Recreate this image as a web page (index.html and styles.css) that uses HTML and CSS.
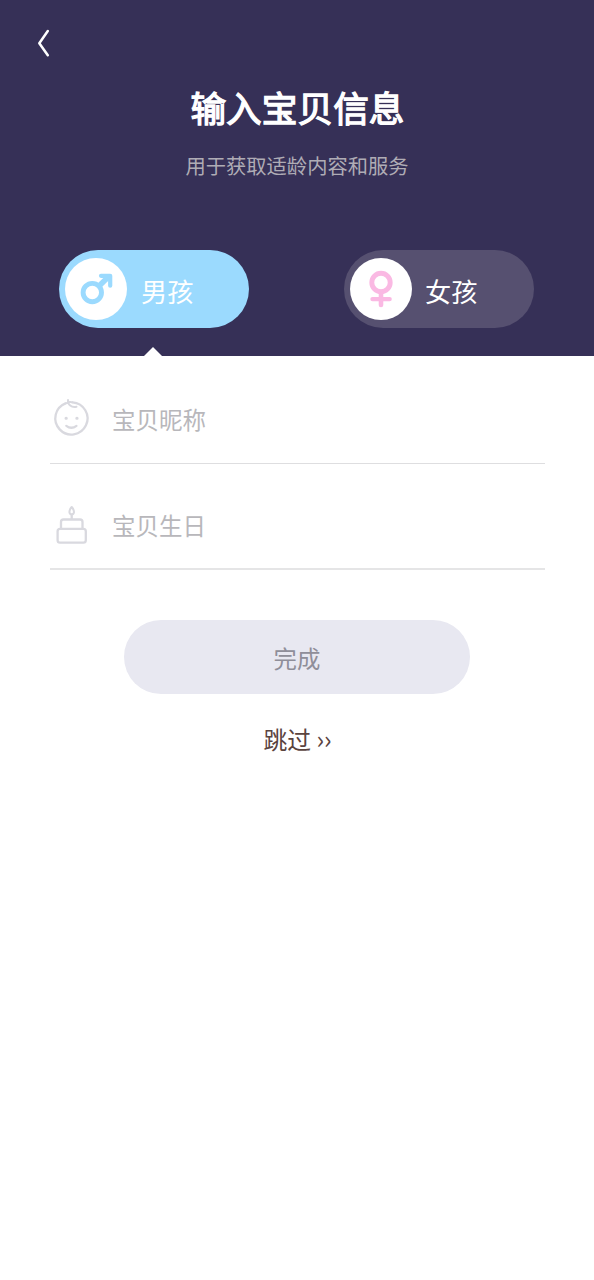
FILE: index.html
```html
<!DOCTYPE html>
<html lang="zh-CN">
<head>
<meta charset="utf-8">
<title>输入宝贝信息</title>
<link rel="stylesheet" href="styles.css">
</head>
<body>
<header class="header">
  <button class="back" aria-label="返回">
    <svg width="16" height="30" viewBox="0 0 16 30" fill="none" stroke="#fff" stroke-width="2.5" stroke-linecap="round" stroke-linejoin="round"><path d="M12.800 3 4.300 15.200l8.500 12"/></svg>
  </button>
  <h1 class="title">输入宝贝信息</h1>
  <p class="subtitle">用于获取适龄内容和服务</p>
  <div class="genders">
    <button class="gender gender-boy">
      <span class="symbol">
        <svg width="62" height="62" viewBox="0 0 62 62" fill="none" stroke="#9bdafe" stroke-width="4.900"><circle cx="27.300" cy="34.600" r="9.200"/><path d="M34.300 27.800 44 18.200" stroke-width="5.500"/><path d="M36 17.800H45.200V27.700" stroke-width="4.200" stroke-linecap="round" stroke-linejoin="round"/></svg>
      </span>
      <span class="label">男孩</span>
    </button>
    <button class="gender">
      <span class="symbol">
        <svg width="62" height="62" viewBox="0 0 62 62" fill="none" stroke="#fab9e3" stroke-width="4.900" stroke-linecap="round"><circle cx="31" cy="24.400" r="9.200"/><path d="M31 34V47" stroke-width="4.600"/><path d="M22.500 41.100H39.600" stroke-width="4.400"/></svg>
      </span>
      <span class="label">女孩</span>
    </button>
  </div>
</header>
<main class="form">
  <div class="field">
    <svg class="icon" width="44" height="44" viewBox="0 0 44 44" fill="none" stroke="#d9d9df" stroke-width="2.300" stroke-linecap="round" stroke-linejoin="round"><path d="M22.500 6.340A16.100 16.100 0 1 1 15.500 7.430"/><path d="M15.500 7.400 18 6.700M18 4C17.500 8.500 21.500 12 26.500 10.700M19.500 6Q21 5.800 22.500 6.340" stroke-width="2"/><path d="M16.300 29.800Q21.300 33.700 26.500 29.800" stroke-width="2.200"/><path d="M16 22.200h.3M26.800 22.200h.3" stroke-width="3"/></svg>
    <span class="placeholder">宝贝昵称</span>
  </div>
  <div class="field field-date">
    <svg class="icon" width="44" height="44" viewBox="0 0 44 44" fill="none" stroke="#d9d9df" stroke-width="2.300" stroke-linejoin="round"><rect x="7.600" y="26.900" width="28.200" height="13.700" rx="2.400"/><path d="M11 26.500V20Q11 17.500 13.500 17.500H30Q32.500 17.500 32.500 20V26.500M21.700 12.500V17.500"/><path d="M21.700 5C18.300 9 19 12.300 21.700 12.300S25.100 9 21.700 5Z" stroke-width="2"/></svg>
    <span class="placeholder">宝贝生日</span>
  </div>
  <button class="submit">完成</button>
  <a class="skip">跳过 <span class="arrows">››</span></a>
</main>
</body>
</html>
```
FILE: styles.css
```css
* { box-sizing: border-box; }
body {
  margin: 0;
  min-height: 1280px;
  background: #fff;
  font-family: "Noto Sans CJK SC", sans-serif;
}
button {
  border: 0;
  padding: 0;
  font-family: inherit;
}
svg { display: block; flex: none; }
.header {
  position: relative;
  height: 356px;
  padding-top: 28px;
  background: #363057;
}
.header::after {
  content: "";
  position: absolute;
  left: 144px;
  bottom: 0;
  border: solid transparent;
  border-width: 0 9.500px 9.500px;
  border-bottom-color: #fff;
}
.back {
  display: block;
  margin-left: 35px;
  background: none;
}
.title {
  margin: 29px 0 0;
  padding-left: 1px;
  color: #fff;
  font-size: 35.700px;
  line-height: 40px;
  font-weight: 400;
  -webkit-text-stroke: 1.300px #fff;
  text-align: center;
}
.subtitle {
  margin: 26px 0 0;
  color: #afacb5;
  font-size: 20.300px;
  line-height: 24px;
  text-align: center;
}
.genders {
  display: flex;
  gap: 95px;
  margin: 73px 0 0 59px;
}
.gender {
  display: flex;
  align-items: center;
  width: 190px;
  height: 78px;
  padding-left: 6px;
  border-radius: 39px;
  background: #565070;
  color: #fff;
}
.gender-boy { background: #9bdafe; }
.gender-boy .label { margin-left: 14px; }
.symbol {
  width: 62px;
  height: 62px;
  border-radius: 50%;
  background: #fff;
}
.label {
  padding-top: 3px;
  margin-left: 13px;
  font-size: 26.200px;
  line-height: 36px;
}
.form {
  display: flex;
  flex-direction: column;
  align-items: center;
  padding: 0 49px 0 50px;
}
.field {
  display: flex;
  align-items: center;
  width: 100%;
  height: 108px;
  padding-top: 18px;
  border-bottom: 1px solid #dedee0;
}
.field-date {
  height: 106px;
  padding-top: 17px;
  border-bottom: 2px solid #e5e5e6;
}
.icon { margin-bottom: 2px; }
.placeholder {
  margin-left: 18px;
  color: #b8b7bb;
  font-size: 23.500px;
  line-height: 34px;
}
.submit {
  width: 346px;
  height: 74px;
  margin: 49.500px 1px 0 0;
  padding-top: 3px;
  border-radius: 37px;
  background: #e8e8f1;
  color: #8f8e99;
  font-size: 23.400px;
}
.skip {
  margin: 27.500px 0 0;
  color: #5a433e;
  font-size: 23.800px;
  line-height: 34px;
}
.arrows { font-size: 25px; }
```
